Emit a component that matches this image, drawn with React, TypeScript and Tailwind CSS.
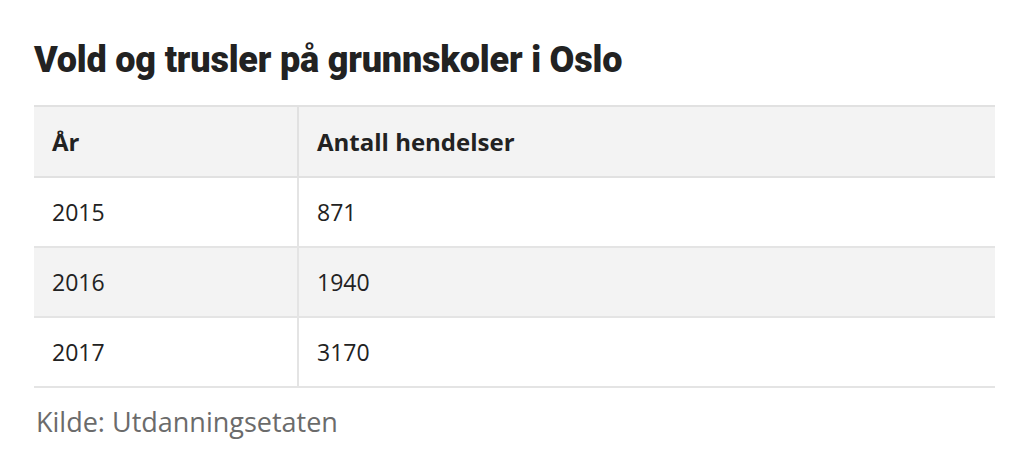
import React from "react";

const rows = [
  ["2015", "871"],
  ["2016", "1940"],
  ["2017", "3170"],
];

export default function App() {
  return (
    <div className="w-[1024px] h-[476px] bg-white pl-[34px] pt-[38px]" style={{ fontFamily: '"Open Sans", sans-serif' }}>
      <div className="w-[961px]">
        <h2
          className="text-[36px] leading-[44px] text-[#222] tracking-[-0.2px] mb-[23px]"
          style={{ fontFamily: 'Roboto, "Liberation Sans", sans-serif', fontWeight: 900 }}
        >
          Vold og trusler på grunnskoler i Oslo
        </h2>
        <table className="w-full border-collapse text-[23px] text-[#222]">
          <thead>
            <tr className="bg-[#f3f3f3] border-t-2 border-b-2 border-[#e1e1e1]">
              <th className="w-[264px] h-[71px] text-left font-bold text-[24px] pl-[18px] border-r-2 border-[#e1e1e1]">År</th>
              <th className="text-left font-bold text-[24px] pl-[18px]">Antall hendelser</th>
            </tr>
          </thead>
          <tbody>
            {rows.map((r, i) => (
              <tr key={r[0]} className={`border-b-2 border-[#e4e4e4] ${i % 2 === 1 ? "bg-[#f3f3f3]" : "bg-white"}`}>
                <td className="h-[70px] pl-[18px] border-r-2 border-[#e4e4e4]">{r[0]}</td>
                <td className="pl-[18px]">{r[1]}</td>
              </tr>
            ))}
          </tbody>
        </table>
        <p className="mt-[16px] pl-[2px] text-[27px] leading-[36px] text-[#6b6b6b]">Kilde: Utdanningsetaten</p>
      </div>
    </div>
  );
}
